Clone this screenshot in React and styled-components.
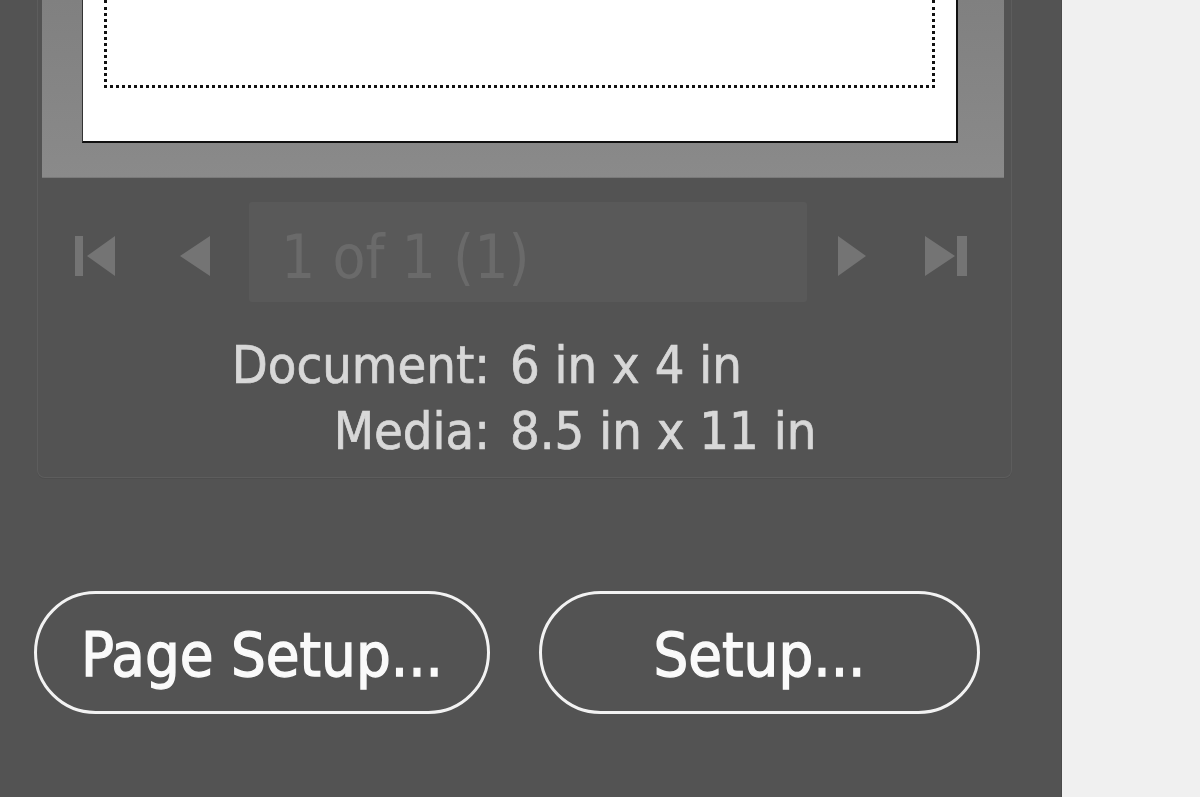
import React from 'react';
import styled, { createGlobalStyle } from 'styled-components';

const GlobalStyle = createGlobalStyle`
  html, body {
    margin: 0;
    padding: 0;
    background: #f0f0f0;
  }
  body {
    font-family: "DejaVu Sans Condensed", "DejaVu Sans", sans-serif;
    font-stretch: condensed;
  }
`;

const Page = styled.div`
  display: flex;
  width: 1200px;
  height: 797px;
  overflow: hidden;
`;

const Sidebar = styled.div`
  width: 1062px;
  height: 100%;
  background: #535353;
  border-right: 1px solid #4a4a4a;
  box-sizing: border-box;
  padding-left: 37px;
  display: flex;
  flex-direction: column;
`;

const Filler = styled.div`
  flex: 1;
  background: #f0f0f0;
`;

const PreviewGroup = styled.div`
  width: 975px;
  height: 478px;
  box-sizing: border-box;
  border: 1px solid #5d5d5d;
  border-top: none;
  border-radius: 0 0 8px 8px;
  box-shadow: 0 1px 0 #4e4e4e;
  padding: 0 7px 0 4px;
`;

const PreviewWell = styled.div`
  height: 178px;
  background: linear-gradient(180deg, #808080 0%, #8a8a8a 100%);
  box-shadow: inset 0 -1px 0 #7a7a7a;
  padding: 0 46px 0 40px;
  box-sizing: border-box;
`;

const Paper = styled.div`
  height: 143px;
  background: #fff;
  box-sizing: border-box;
  border-left: 1px solid #333;
  border-right: 2px solid #111;
  border-bottom: 2px solid #111;
  padding: 0 21px 0 21px;
`;

const MarginGuide = styled.div`
  height: 88px;
  box-sizing: border-box;
  border: 3px dotted #111;
  border-top: none;
`;

const NavRow = styled.div`
  display: flex;
  align-items: center;
  margin-top: 24px;
  padding-left: 18px;
`;

const NavCell = styled.div`
  width: 70px;
  height: 98px;
  display: flex;
  align-items: center;
  justify-content: center;
  padding-top: 8px;
  box-sizing: border-box;
  margin-right: ${(p) => p.$gap}px;
`;

const PageField = styled.div`
  width: 558px;
  height: 100px;
  box-sizing: border-box;
  background: #595959;
  border-radius: 3px;
  margin-right: 10px;
  margin-left: 4px;
  padding-left: 32px;
  padding-top: 10px;
  display: flex;
  align-items: center;
  font-size: 60px;
  color: #6a6a6a;
`;

const InfoGrid = styled.div`
  display: grid;
  grid-template-columns: 448px auto;
  column-gap: 20px;
  margin-top: 30px;
  font-size: 52px;
  line-height: 66px;
  color: #d8d8d8;
  -webkit-text-stroke: 0.7px #d8d8d8;
`;

const InfoLabel = styled.div`
  text-align: right;
`;

const InfoValue = styled.div``;

const ButtonRow = styled.div`
  display: flex;
  gap: 49px;
  margin-top: 113px;
  margin-left: -3px;
`;

const PillButton = styled.button`
  width: ${(p) => p.$width}px;
  height: 123px;
  box-sizing: border-box;
  border: 3px solid #f2f2f2;
  border-radius: 62px;
  background: transparent;
  color: #fafafa;
  font-family: inherit;
  font-stretch: condensed;
  font-size: 61px;
  -webkit-text-stroke: 1.3px #fafafa;
  padding: 0;
  padding-top: 4px;
`;

const First = () => (
  <svg width="40" height="40" viewBox="0 0 40 40">
    <rect x="0" y="0" width="8" height="40" fill="#747474" />
    <path d="M12 20 L40 0 V40 Z" fill="#747474" />
  </svg>
);

const Prev = () => (
  <svg width="30" height="40" viewBox="0 0 30 40">
    <path d="M0 20 L30 0 V40 Z" fill="#747474" />
  </svg>
);

const Next = () => (
  <svg width="28" height="40" viewBox="0 0 28 40">
    <path d="M28 20 L0 0 V40 Z" fill="#747474" />
  </svg>
);

const Last = () => (
  <svg width="42" height="40" viewBox="0 0 42 40">
    <path d="M30 20 L0 0 V40 Z" fill="#747474" />
    <rect x="32" y="0" width="10" height="40" fill="#747474" />
  </svg>
);

export default function App() {
  return (
    <Page>
      <GlobalStyle />
      <Sidebar>
        <PreviewGroup>
          <PreviewWell>
            <Paper>
              <MarginGuide />
            </Paper>
          </PreviewWell>
          <NavRow>
            <NavCell $gap={30}><First /></NavCell>
            <NavCell $gap={15}><Prev /></NavCell>
            <PageField>1 of 1 (1)</PageField>
            <NavCell $gap={24}><Next /></NavCell>
            <NavCell $gap={0}><Last /></NavCell>
          </NavRow>
          <InfoGrid>
            <InfoLabel>Document:</InfoLabel>
            <InfoValue>6 in x 4 in</InfoValue>
            <InfoLabel>Media:</InfoLabel>
            <InfoValue>8.5 in x 11 in</InfoValue>
          </InfoGrid>
        </PreviewGroup>
        <ButtonRow>
          <PillButton $width={456}>Page Setup...</PillButton>
          <PillButton $width={441}>Setup...</PillButton>
        </ButtonRow>
      </Sidebar>
      <Filler />
    </Page>
  );
}
